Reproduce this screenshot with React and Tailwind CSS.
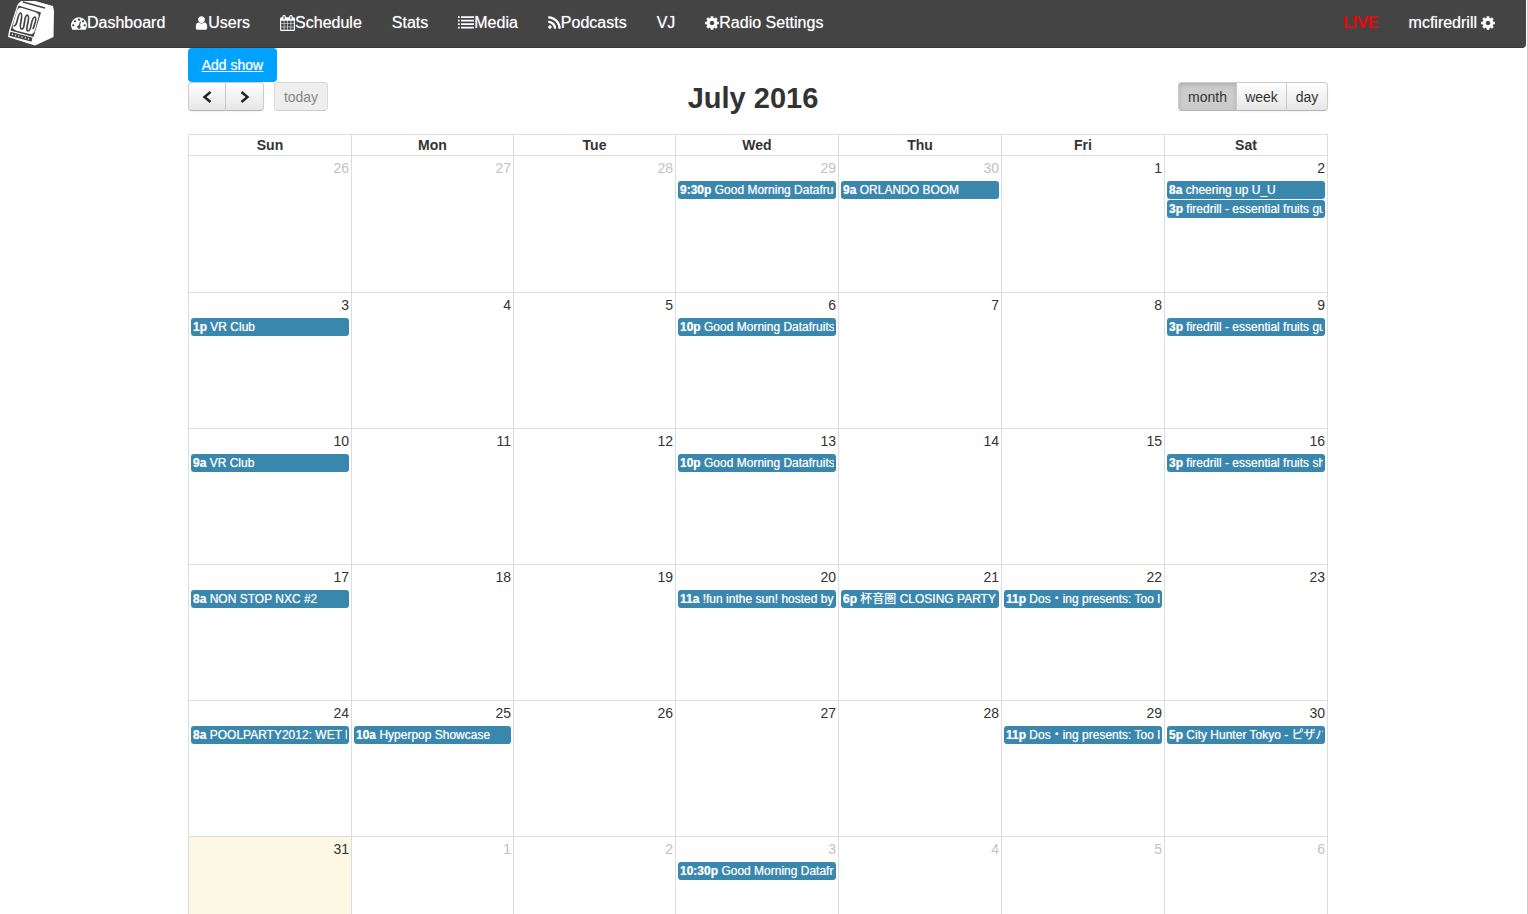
const PATHS = {
  dashboard: ["0 0 1792 1792", "w-4", "M384 1152q0-53-37.5-90.5t-90.5-37.5-90.5 37.5-37.5 90.5 37.5 90.5 90.5 37.5 90.5-37.5 37.5-90.5zm192-448q0-53-37.5-90.5t-90.5-37.5-90.5 37.5-37.5 90.5 37.5 90.5 90.5 37.5 90.5-37.5 37.5-90.5zm428 481l101-382q6-26-7.5-48.5t-38.5-29.5-48 6.5-30 39.5l-101 382q-60 5-107 43.5t-63 98.5q-20 77 20 146t117 89 146-20 89-117q16-60-6-117t-72-91zm660-33q0-53-37.5-90.5t-90.5-37.5-90.5 37.5-37.5 90.5 37.5 90.5 90.5 37.5 90.5-37.5 37.5-90.5zm-640-640q0-53-37.5-90.5t-90.5-37.5-90.5 37.5-37.5 90.5 37.5 90.5 90.5 37.5 90.5-37.5 37.5-90.5zm448 192q0-53-37.5-90.5t-90.5-37.5-90.5 37.5-37.5 90.5 37.5 90.5 90.5 37.5 90.5-37.5 37.5-90.5zm320 448q0 261-141 483-19 29-54 29h-1402q-35 0-54-29-141-221-141-483 0-182 71-348t191-286 286-191 348-71 348 71 286 191 191 286 71 348z"],
  user: ["256 0 1280 1792", "w-[13px]", "M1536 1399q0 109-62.5 187t-150.5 78h-854q-88 0-150.5-78t-62.5-187q0-85 8.5-160.5t31.5-152 58.5-131 94-89 134.5-34.5q131 128 313 128t313-128q76 0 134.5 34.5t94 89 58.5 131 31.5 152 8.5 160.5zm-256-887q0 159-112.5 271.5t-271.5 112.5-271.5-112.5-112.5-271.5 112.5-271.5 271.5-112.5 271.5 112.5 112.5 271.5z"],
  calendar: ["64 0 1664 1792", "w-[15px]", "M192 1664h288v-288h-288v288zm352 0h320v-288h-320v288zm-352-352h288v-320h-288v320zm352 0h320v-320h-320v320zm-352-384h288v-288h-288v288zm736 736h320v-288h-320v288zm-384-736h320v-288h-320v288zm768 736h288v-288h-288v288zm-384-352h320v-320h-320v320zm-352-864v-288q0-13-9.5-22.5t-22.5-9.5h-64q-13 0-22.5 9.5t-9.5 22.5v288q0 13 9.5 22.5t22.5 9.5h64q13 0 22.5-9.5t9.5-22.5zm736 864h288v-320h-288v320zm-384-384h320v-288h-320v288zm384 0h288v-288h-288v288zm32-480v-288q0-13-9.5-22.5t-22.5-9.5h-64q-13 0-22.5 9.5t-9.5 22.5v288q0 13 9.5 22.5t22.5 9.5h64q13 0 22.5-9.5t9.5-22.5zm384-64v1280q0 52-38 90t-90 38h-1408q-52 0-90-38t-38-90v-1280q0-52 38-90t90-38h128v-96q0-66 47-113t113-47h64q66 0 113 47t47 113v96h384v-96q0-66 47-113t113-47h64q66 0 113 47t47 113v96h128q52 0 90 38t38 90z"],
  list: ["0 0 16 16", "w-4", "M0 1.200h1.700v1.700H0zM3 1.200h13v1.700H3zM0 4.700h1.700v1.700H0zM3 4.700h13v1.700H3zM0 8.200h1.700v1.700H0zM3 8.200h13v1.700H3zM0 11.700h1.700v1.700H0zM3 11.700h13v1.700H3z"],
  rss: ["192 0 1408 1792", "w-[13px]", "M576 1344q0 80-56 136t-136 56-136-56-56-136 56-136 136-56 136 56 56 136zm512 123q2 28-17 48-18 21-47 21h-135q-25 0-43-16.5t-20-41.5q-22-229-184.5-391.5t-391.5-184.5q-25-2-41.5-20t-16.5-43v-135q0-29 21-47 17-17 43-17h5q160 13 306 80.5t259 181.5q114 113 181.5 259t80.5 306zm512 2q2 27-18 47-18 20-46 20h-143q-26 0-44.5-17.5t-19.5-42.5q-12-215-101-408.5t-231.5-336-336-231.5-408.5-102q-25-1-42.5-19.5t-17.5-43.5v-143q0-28 20-46 18-18 44-18h3q262 13 501.5 120t425.5 294q187 186 294 425.5t120 501.5z"],
  cog: ["128 0 1536 1792", "w-[14px]", "M1152 896q0-106-75-181t-181-75-181 75-75 181 75 181 181 75 181-75 75-181zm512-109v222q0 12-8 23t-20 13l-185 28q-19 54-39 91 35 50 107 138 10 12 10 25t-9 23q-27 37-99 108t-94 71q-12 0-26-9l-138-108q-44 23-91 38-16 136-29 186-7 28-36 28h-222q-14 0-24.5-8.5t-11.5-21.5l-28-184q-49-16-90-37l-141 107q-10 9-25 9-14 0-25-11-126-114-165-168-7-10-7-23 0-12 8-23 15-21 51-66.5t54-70.5q-27-50-41-99l-183-27q-13-2-21-12.5t-8-23.5v-222q0-12 8-23t19-13l186-28q14-46 39-92-40-57-107-138-10-12-10-24 0-10 9-23 26-36 98.5-107.5t94.5-71.5q13 0 26 10l138 107q44-23 91-38 16-136 29-186 7-28 36-28h222q14 0 24.5 8.5t11.5 21.5l28 184q49 16 90 37l142-107q9-9 24-9 13 0 25 10 129 119 165 170 7 8 7 22 0 12-8 23-15 21-51 66.5t-54 70.5q26 50 41 98l183 28q13 2 21 12.5t8 23.5z"],
};

function Icon({ name }) {
  const [viewBox, width, d] = PATHS[name];
  return (
    <svg viewBox={viewBox} className={`h-4 shrink-0 fill-current ${width}`} aria-hidden="true">
      <path d={d} />
    </svg>
  );
}

function Logo() {
  return (
    <svg viewBox="0 0 46 46" className="h-[46px] w-[46px]" aria-hidden="true">
      <path d="M10 3 L13 0 L27 0 L45 5 L46 10 L45.500 36 L27 44.500 L0 36 L1 30 L9 5 Z" fill="#fff" />
      <path d="M15 1 L37 7" fill="none" stroke="#444" strokeWidth="1.8" />
      <path d="M10.500 4.500 L33 11.500 L25.500 36 L2.500 29.500 Z" fill="#444" />
      <path d="M14 7 L27 11 Q31.500 12.500 30.500 16 L27 29 Q25.500 34 21.500 33 L8 29.500 Q3.800 28 4.800 24 L9 10 Q10.500 6 14 7 Z" fill="#fff" />
      <path d="M5.500 24.500 C9.500 27 9.500 11.500 12.500 12 C16.500 13 9.500 27 13.500 28 C17.500 29 15.500 13.500 19.500 14.200 C23.500 15.500 16 29.500 20 30 C24 30.500 22.500 16 27 16 C29.500 17 26 25 25 28" fill="none" stroke="#444" strokeWidth="1.700" />
      <path d="M2 32.800 L24 38.800" stroke="#444" strokeWidth="4" />
      <path d="M4 33.300 L23 38.500" stroke="#fff" strokeWidth="1.500" strokeDasharray="1 2.300" />
    </svg>
  );
}

const NAV = [
  ["Dashboard", "dashboard"],
  ["Users", "user"],
  ["Schedule", "calendar"],
  ["Stats"],
  ["Media", "list"],
  ["Podcasts", "rss"],
  ["VJ"],
  ["Radio Settings", "cog"],
];

const DAYS = ["Sun", "Mon", "Tue", "Wed", "Thu", "Fri", "Sat"];
const GUEST = "firedrill - essential fruits guest mix";
const MORNING = "Good Morning Datafruits";

const WEEKS = [
  [
    { n: 26, out: true },
    { n: 27, out: true },
    { n: 28, out: true },
    { n: 29, out: true, events: [["9:30p", MORNING]] },
    { n: 30, out: true, events: [["9a", "ORLANDO BOOM"]] },
    { n: 1 },
    { n: 2, events: [["8a", "cheering up U_U"], ["3p", GUEST]] },
  ],
  [
    { n: 3, events: [["1p", "VR Club"]] },
    { n: 4 },
    { n: 5 },
    { n: 6, events: [["10p", MORNING]] },
    { n: 7 },
    { n: 8 },
    { n: 9, events: [["3p", GUEST]] },
  ],
  [
    { n: 10, events: [["9a", "VR Club"]] },
    { n: 11 },
    { n: 12 },
    { n: 13, events: [["10p", MORNING]] },
    { n: 14 },
    { n: 15 },
    { n: 16, events: [["3p", "firedrill - essential fruits show"]] },
  ],
  [
    { n: 17, events: [["8a", "NON STOP NXC #2"]] },
    { n: 18 },
    { n: 19 },
    { n: 20, events: [["11a", "!fun inthe sun! hosted by"]] },
    { n: 21, events: [["6p", "杯音圏 CLOSING PARTY -"]] },
    { n: 22, events: [["11p", "Dos・ing presents: Too Late"]] },
    { n: 23 },
  ],
  [
    { n: 24, events: [["8a", "POOLPARTY2012: WET NIGHT"]] },
    { n: 25, events: [["10a", "Hyperpop Showcase"]] },
    { n: 26 },
    { n: 27 },
    { n: 28 },
    { n: 29, events: [["11p", "Dos・ing presents: Too Late"]] },
    { n: 30, events: [["5p", "City Hunter Tokyo - ピザパ"]] },
  ],
  [
    { n: 31, today: true },
    { n: 1, out: true },
    { n: 2, out: true },
    { n: 3, out: true, events: [["10:30p", MORNING]] },
    { n: 4, out: true },
    { n: 5, out: true },
    { n: 6, out: true },
  ],
];

const BUTTON =
  "flex h-[29px] items-center justify-center border border-[#ccc] border-b-[#b3b3b3] pt-px text-[14px] leading-5 text-[#333] ";
const RAISED = "bg-linear-to-b from-white to-[#e6e6e6] shadow-[inset_0_1px_0_#fff,0_1px_2px_#0000000d] ";

function Chevron({ d }) {
  return (
    <svg viewBox="0 0 10 12" className="h-3 w-[10px]" aria-hidden="true">
      <path d={d} fill="none" stroke="#222" strokeWidth="2.4" />
    </svg>
  );
}

function Toolbar() {
  return (
    <div className="flex items-start justify-between">
      <div className="flex">
        <button aria-label="Previous month" className={BUTTON + RAISED + "w-[38px] rounded-l-[4px]"}>
          <Chevron d="M8.500 1 L2.500 6 L8.500 11" />
        </button>
        <button aria-label="Next month" className={BUTTON + RAISED + "w-[38px] rounded-r-[4px] border-l-0"}>
          <Chevron d="M1.500 1 L7.500 6 L1.500 11" />
        </button>
        <button disabled className="ml-[10px] flex h-[29px] w-[54px] items-center justify-center rounded-[4px] border border-[#d9d9d9] border-b-[#ccc] bg-[#eee] pt-px text-[14px] leading-5 text-[#858585]">
          today
        </button>
      </div>
      <h2 className="text-center text-[29px] leading-[32px] font-bold text-[#333]">July 2016</h2>
      <div className="flex justify-end">
        <button aria-pressed="true" className={BUTTON + "w-[59px] rounded-l-[4px] border-[#aaa] bg-[#ccc] shadow-[inset_0_2px_4px_#00000026]"}>
          month
        </button>
        <button className={BUTTON + RAISED + "w-[50px] border-l-0"}>week</button>
        <button className={BUTTON + RAISED + "w-[41px] rounded-r-[4px] border-l-0"}>day</button>
      </div>
    </div>
  );
}

function Day({ day }) {
  return (
    <td className={`border border-b-0 border-[#ddd] p-0 align-top ${day.today ? "bg-[#fcf8e3]" : ""}`}>
      <div className={`pt-0.5 pr-0.5 text-right text-[14px] leading-5 ${day.out ? "text-[#c2c2c2]" : "text-[#333]"}`}>
        {day.n}
      </div>
      <div className="flex flex-col gap-px px-0.5 pt-[3px]">
        {(day.events || []).map(([time, title]) => (
          <a key={time} href="#event" className="block rounded-[3px] bg-[#3a87ad] px-0.5 text-[12px] leading-[18px] text-white [text-shadow:0_0_1px_#ffffff99]">
            <span className="block overflow-hidden whitespace-nowrap">
              <b>{time}</b> {title}
            </span>
          </a>
        ))}
      </div>
    </td>
  );
}

export default function App() {
  return (
    <div className="min-h-screen border-r border-[#ccc] bg-white font-['Liberation_Sans','Noto_Sans_CJK_JP',sans-serif]">
      <nav className="mr-px flex h-12 items-center rounded-br-[4px] border-b border-[#3a3a3a] bg-[#444] pr-4 pl-2 text-[16px] leading-5 text-white [text-shadow:0_0_1px_#ffffff99]">
        <a href="#home" aria-label="Home">
          <Logo />
        </a>
        <ul className="flex grow pb-0.5 pl-0.5">
          {NAV.map(([label, icon]) => (
            <li key={label}>
              <a href="#nav" className="flex items-center px-[15px]">
                {icon && <Icon name={icon} />}
                {label}
              </a>
            </li>
          ))}
        </ul>
        <ul className="flex pb-0.5">
          <li>
            <a href="#live" className="px-[15px] text-[#f00] [text-shadow:0_0_1px_#f00]">LIVE</a>
          </li>
          <li>
            <a href="#account" className="flex items-center gap-1 px-[15px]">
              mcfiredrill <Icon name="cog" />
            </a>
          </li>
        </ul>
      </nav>
      <main className="pr-[11px]">
        <div className="mx-auto max-w-[1140px]">
          <a href="#add" className="flex h-[34px] w-[89px] items-center justify-center rounded-[4px] bg-[#00a2ff] text-[14px] text-white underline [text-shadow:0_0_1px_#ffffff99]">
            Add show
          </a>
          <Toolbar />
          <table className="mt-5 w-full table-fixed border-collapse">
            <thead>
              <tr className="h-[21px]">
                {DAYS.map((d) => (
                  <th
                    key={d}
                    scope="col"
                    className={`border border-[#ddd] p-0 text-center text-[14px] leading-5 font-bold text-[#333] ${d === "Mon" || d === "Tue" ? "w-[162px]" : ""}`}
                  >
                    {d}
                  </th>
                ))}
              </tr>
            </thead>
            <tbody>
              {WEEKS.map((week, i) => (
                <tr key={i} className={i === 0 ? "h-[137px]" : i === WEEKS.length - 1 ? "h-[77px]" : "h-[136px]"}>
                  {week.map((day, j) => (
                    <Day key={j} day={day} />
                  ))}
                </tr>
              ))}
            </tbody>
          </table>
        </div>
      </main>
    </div>
  );
}
